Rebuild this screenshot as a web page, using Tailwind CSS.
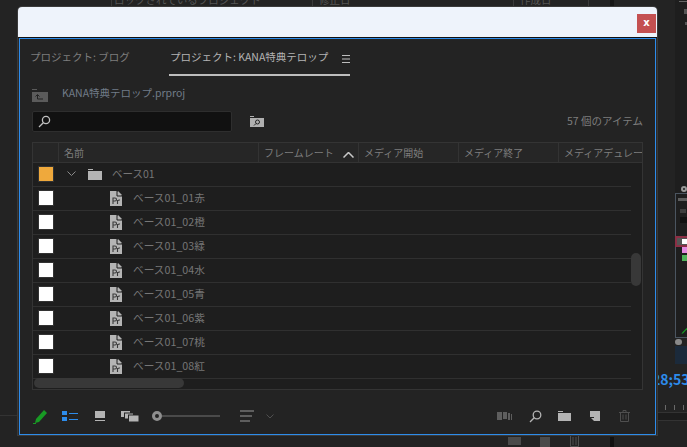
<!DOCTYPE html>
<html lang="ja">
<head>
<meta charset="utf-8">
<script src="https://cdn.jsdelivr.net/npm/@tailwindcss/browser@4"></script>
</head>
<body class="m-0 bg-[#232323]">
<div class="relative w-[687px] h-[447px] overflow-hidden bg-[#232323] font-['Noto_Sans_CJK_JP','Noto_Sans',sans-serif] text-[10.5px] leading-none text-[#8a8a8a]">

  <!-- application behind the dialog -->
  <div class="absolute left-[111px] top-[-5px] h-[12px] flex text-[#555] whitespace-nowrap">
    <span class="w-[201px] pl-[2px] border-l border-[#3a3a3a]">ロックされているプロジェクト</span>
    <span class="w-[201px] pl-[6px] border-l border-[#3a3a3a]">修正日</span>
    <span class="w-[76px] pl-[6px] border-x border-[#3a3a3a]">作成日</span>
  </div>
  <div class="absolute left-[610px] top-0 w-[4px] h-[7px] bg-[#161616]"></div>
  <div class="absolute left-[675px] top-0 w-[12px] h-[193px] bg-[#1e1e1e]">
    <div class="ml-[4px] mt-[1px] h-[1px] bg-[#666]"></div>
    <div class="ml-[9px] mt-[7px] w-[3px] h-[5px] bg-[#555]"></div>
    <div class="ml-[10px] mt-[8px] w-[2px] h-[3px] bg-[#555]"></div>
    <div class="ml-[6px] mt-[161px] w-[6px] h-[6px] rounded-full border-2 border-[#999]"></div>
  </div>
  <div class="absolute left-[675px] top-[193px] w-[13px] h-[145px] border border-[#4b5560] bg-[#1e1e1e]">
    <div class="ml-[2px] mt-[4px] w-[9px] h-[3px] bg-[#5e5e5e]"></div>
    <div class="ml-[4px] mt-[8px] w-[6px] h-[4px] bg-[#3e3e3e]"></div>
    <div class="ml-[4px] mt-[4px] w-[8px] h-[6px] bg-[#111]"></div>
    <div class="mt-[13px] -ml-[1px] w-[14px] h-[11px] border-2 border-[#8c2f45] bg-[#555] flex items-center justify-end"><span class="w-[5px] h-[5px] bg-white"></span></div>
    <div class="ml-[6px] w-[6px] h-[6px] bg-[#e58ae0]"></div>
    <div class="ml-[6px] mt-[2px] w-[6px] h-[6px] bg-[#4fb25a]"></div>
    <svg class="ml-[5px] mt-[67px] w-[7px] h-[6px]" viewBox="0 0 7 7"><path d="M6 0l1 1-5 5-2 1 1-2z" fill="#189a24"/></svg>
  </div>
  <div class="absolute left-[675px] top-[339px] w-[7px] h-[6px] rounded-full bg-[#8a8a8a]"></div>
  <div class="absolute left-[675px] top-[346px] w-[12px] h-[18px] bg-[#1b2a3b]"></div>
  <div class="absolute left-[652px] top-[372px] text-[14px] font-bold whitespace-nowrap text-[#2d8ceb]">28;53</div>
  <div class="absolute left-[657px] top-[412px] w-[30px] h-[9px] bg-[#1c1c1c] border-y border-[#333]"></div>
  <div class="absolute left-[665px] top-[405px] w-[1px] h-[5px] bg-[#6a6a6a]"></div>
  <div class="absolute left-[674px] top-[405px] w-[1px] h-[5px] bg-[#6a6a6a]"></div>
  <div class="absolute left-[683px] top-[405px] w-[1px] h-[5px] bg-[#6a6a6a]"></div>
  <div class="absolute left-0 top-[415px] w-[18px] h-[1px] bg-[#333]"></div>
  <div class="absolute left-[508px] top-[437px] w-[13px] h-[8px] bg-[#4a4a4a]"></div>
  <div class="absolute left-[540px] top-[437px] w-[10px] h-[10px] bg-[#4a4a4a]"></div>
  <svg class="absolute left-[570px] top-[436px] w-[9px] h-[11px]" viewBox="0 0 9 11" fill="none" stroke="#4f4f4f"><path d="M.5 0v10.500h8V0M3 1v8M6 1v8"/></svg>
  <div class="absolute left-[610px] top-[437px] w-[4px] h-[10px] bg-[#111]"></div>

  <!-- dialog -->
  <div class="absolute left-[18px] top-[7px] w-[639px] h-[428px] rounded-t-[4px] bg-[#2a2a2a] flex flex-col shadow-[0_0_0_1px_#3a3a3a]">
    <div class="h-[30px] shrink-0 rounded-t-[4px] bg-[#eef3fb] flex justify-end items-start pt-[7px] pr-[1px]">
      <div class="w-[19px] h-[19px] bg-[#c45051] flex items-center justify-center text-white font-bold text-[10px] pb-[2px] font-['DejaVu_Sans',sans-serif]">x</div>
    </div>
    <div class="h-[1px] bg-[#111]"></div>
    <div class="flex-1 ml-[1px] mr-[1px] border border-[#2d8ceb] bg-[#232323] flex flex-col">

      <!-- tabs -->
      <div class="h-[37px] shrink-0 flex pl-[10px] pt-[1px]">
        <div class="w-[139px] pt-[12px] text-[#7e7e7e]">プロジェクト: ブログ</div>
        <div class="w-[181px] h-[36px] border-b-2 border-[#bdbdbd] pt-[12px] pl-[1px] flex text-[#b4b4b4]">
          <span class="w-[172px] whitespace-nowrap">プロジェクト: KANA特典テロップ</span>
          <svg class="w-[8px] h-[8px] mt-[3px] shrink-0" viewBox="0 0 8 8" fill="#bdbdbd"><rect y="0" width="8" height="1"/><rect y="3.500" width="8" height="1"/><rect y="7" width="8" height="1"/></svg>
        </div>
      </div>

      <!-- path -->
      <div class="h-[34px] shrink-0 flex items-center pl-[12px]">
        <svg class="w-[16px] h-[13px] mt-[5px]" viewBox="0 0 16 13"><path d="M0 0h5v1H0zM0 3h16v10H0z" fill="#5b5b5b"/><path d="M3.500 7.500l2-2 2 2M5.500 6v4H11" stroke="#232323" fill="none"/></svg>
        <span class="ml-[14px] text-[#717c88]">KANA特典テロップ.prproj</span>
      </div>

      <!-- search -->
      <div class="h-[22px] shrink-0 flex items-center pl-[12px] pr-[12px]">
        <div class="w-[200px] h-[21px] rounded-[2px] bg-[#111] border border-[#2e2e2e] flex items-center pl-[5px]">
          <svg class="w-[13px] h-[13px]" viewBox="0 0 13 13" fill="none" stroke="#c0c0c0" stroke-width="1.3"><circle cx="8" cy="5" r="3.6"/><path d="M5.3 7.800L1 12"/></svg>
        </div>
        <svg class="ml-[18px] w-[14px] h-[11px]" viewBox="0 0 14 11"><path d="M0 0h4v1H0zM0 2h14v9H0z" fill="#b0b0b0"/><circle cx="7.500" cy="6" r="2" fill="none" stroke="#232323"/><path d="M6 7.500L4 9.500" stroke="#232323"/></svg>
        <span class="ml-auto text-[#7e7e7e]">57 個のアイテム</span>
      </div>

      <!-- table -->
      <div class="relative mt-[10px] ml-[12px] w-[611px] h-[248px] shrink-0 border border-[#343434] bg-[#1e1e1e] overflow-hidden">
        <div class="h-[20px] bg-[#262626] border-b border-[#333] flex text-[10px] text-[#7e7e7e] whitespace-nowrap">
          <div class="w-[26px] border-r border-[#333]"></div>
          <div class="w-[200px] pl-[5px] pt-[5px] border-r border-[#333]">名前</div>
          <div class="w-[100px] pl-[5px] pt-[5px] border-r border-[#333] flex items-start">
            <span class="w-[70px]">フレームレート</span>
            <svg class="ml-[9px] mt-[4px] w-[11px] h-[6px] shrink-0" viewBox="0 0 11 6" fill="none" stroke="#c8c8c8" stroke-width="1.500"><path d="M.5 5.500l5-5 5 5"/></svg>
          </div>
          <div class="w-[100px] pl-[5px] pt-[5px] border-r border-[#333]">メディア開始</div>
          <div class="w-[100px] pl-[5px] pt-[5px] border-r border-[#333]">メディア終了</div>
          <div class="flex-1 pl-[5px] pt-[5px] overflow-hidden">メディアデュレーション</div>
        </div>
        <div class="w-[598px] flex flex-col text-[#767676]">
          <div class="h-[24px] pb-[1px] border-b border-[#303030] flex items-center pl-[6px]">
            <span class="w-[14px] h-[14px] bg-[#efa93c] outline outline-1 outline-[#333]"></span>
            <svg class="ml-[14px] w-[9px] h-[6px]" viewBox="0 0 9 6" fill="none" stroke="#8a8a8a"><path d="M.5.5l4 4 4-4"/></svg>
            <svg class="ml-[12px] w-[14px] h-[11px]" viewBox="0 0 14 11" fill="#b4b4b4"><path d="M0 0h5v1H0zM0 2h14v9H0z"/></svg>
            <span class="ml-[10px]">ベース01</span>
          </div>
          <div class="h-[24px] pb-[1px] border-b border-[#303030] flex items-center pl-[6px]"><span class="w-[14px] h-[14px] bg-white outline outline-1 outline-[#333]"></span><svg class="ml-[57px] w-[12px] h-[15px]" viewBox="0 0 12 15"><path d="M0 0h7l5 5v10H0z" fill="#b4b4b4"/><path d="M8 0l4 4H8z" fill="#b4b4b4"/><path d="M7 0v5h5" fill="none" stroke="#1e1e1e"/><path d="M3 13V7h2a1.500 1.500 0 010 3H3M7.500 13V9M7.500 10q1-1.200 2.500-1" fill="none" stroke="#3a3a3a" stroke-width="1.100"/></svg><span class="ml-[11px] text-[10.7px]">ベース01_01赤</span></div>
          <div class="h-[24px] pb-[1px] border-b border-[#303030] flex items-center pl-[6px]"><span class="w-[14px] h-[14px] bg-white outline outline-1 outline-[#333]"></span><svg class="ml-[57px] w-[12px] h-[15px]" viewBox="0 0 12 15"><path d="M0 0h7l5 5v10H0z" fill="#b4b4b4"/><path d="M8 0l4 4H8z" fill="#b4b4b4"/><path d="M7 0v5h5" fill="none" stroke="#1e1e1e"/><path d="M3 13V7h2a1.500 1.500 0 010 3H3M7.500 13V9M7.500 10q1-1.200 2.500-1" fill="none" stroke="#3a3a3a" stroke-width="1.100"/></svg><span class="ml-[11px] text-[10.7px]">ベース01_02橙</span></div>
          <div class="h-[24px] pb-[1px] border-b border-[#303030] flex items-center pl-[6px]"><span class="w-[14px] h-[14px] bg-white outline outline-1 outline-[#333]"></span><svg class="ml-[57px] w-[12px] h-[15px]" viewBox="0 0 12 15"><path d="M0 0h7l5 5v10H0z" fill="#b4b4b4"/><path d="M8 0l4 4H8z" fill="#b4b4b4"/><path d="M7 0v5h5" fill="none" stroke="#1e1e1e"/><path d="M3 13V7h2a1.500 1.500 0 010 3H3M7.500 13V9M7.500 10q1-1.200 2.500-1" fill="none" stroke="#3a3a3a" stroke-width="1.100"/></svg><span class="ml-[11px] text-[10.7px]">ベース01_03緑</span></div>
          <div class="h-[24px] pb-[1px] border-b border-[#303030] flex items-center pl-[6px]"><span class="w-[14px] h-[14px] bg-white outline outline-1 outline-[#333]"></span><svg class="ml-[57px] w-[12px] h-[15px]" viewBox="0 0 12 15"><path d="M0 0h7l5 5v10H0z" fill="#b4b4b4"/><path d="M8 0l4 4H8z" fill="#b4b4b4"/><path d="M7 0v5h5" fill="none" stroke="#1e1e1e"/><path d="M3 13V7h2a1.500 1.500 0 010 3H3M7.500 13V9M7.500 10q1-1.200 2.500-1" fill="none" stroke="#3a3a3a" stroke-width="1.100"/></svg><span class="ml-[11px] text-[10.7px]">ベース01_04水</span></div>
          <div class="h-[24px] pb-[1px] border-b border-[#303030] flex items-center pl-[6px]"><span class="w-[14px] h-[14px] bg-white outline outline-1 outline-[#333]"></span><svg class="ml-[57px] w-[12px] h-[15px]" viewBox="0 0 12 15"><path d="M0 0h7l5 5v10H0z" fill="#b4b4b4"/><path d="M8 0l4 4H8z" fill="#b4b4b4"/><path d="M7 0v5h5" fill="none" stroke="#1e1e1e"/><path d="M3 13V7h2a1.500 1.500 0 010 3H3M7.500 13V9M7.500 10q1-1.200 2.500-1" fill="none" stroke="#3a3a3a" stroke-width="1.100"/></svg><span class="ml-[11px] text-[10.7px]">ベース01_05青</span></div>
          <div class="h-[24px] pb-[1px] border-b border-[#303030] flex items-center pl-[6px]"><span class="w-[14px] h-[14px] bg-white outline outline-1 outline-[#333]"></span><svg class="ml-[57px] w-[12px] h-[15px]" viewBox="0 0 12 15"><path d="M0 0h7l5 5v10H0z" fill="#b4b4b4"/><path d="M8 0l4 4H8z" fill="#b4b4b4"/><path d="M7 0v5h5" fill="none" stroke="#1e1e1e"/><path d="M3 13V7h2a1.500 1.500 0 010 3H3M7.500 13V9M7.500 10q1-1.200 2.500-1" fill="none" stroke="#3a3a3a" stroke-width="1.100"/></svg><span class="ml-[11px] text-[10.7px]">ベース01_06紫</span></div>
          <div class="h-[24px] pb-[1px] border-b border-[#303030] flex items-center pl-[6px]"><span class="w-[14px] h-[14px] bg-white outline outline-1 outline-[#333]"></span><svg class="ml-[57px] w-[12px] h-[15px]" viewBox="0 0 12 15"><path d="M0 0h7l5 5v10H0z" fill="#b4b4b4"/><path d="M8 0l4 4H8z" fill="#b4b4b4"/><path d="M7 0v5h5" fill="none" stroke="#1e1e1e"/><path d="M3 13V7h2a1.500 1.500 0 010 3H3M7.500 13V9M7.500 10q1-1.200 2.500-1" fill="none" stroke="#3a3a3a" stroke-width="1.100"/></svg><span class="ml-[11px] text-[10.7px]">ベース01_07桃</span></div>
          <div class="h-[24px] pb-[1px] border-b border-[#303030] flex items-center pl-[6px]"><span class="w-[14px] h-[14px] bg-white outline outline-1 outline-[#333]"></span><svg class="ml-[57px] w-[12px] h-[15px]" viewBox="0 0 12 15"><path d="M0 0h7l5 5v10H0z" fill="#b4b4b4"/><path d="M8 0l4 4H8z" fill="#b4b4b4"/><path d="M7 0v5h5" fill="none" stroke="#1e1e1e"/><path d="M3 13V7h2a1.500 1.500 0 010 3H3M7.500 13V9M7.500 10q1-1.200 2.500-1" fill="none" stroke="#3a3a3a" stroke-width="1.100"/></svg><span class="ml-[11px] text-[10.7px]">ベース01_08紅</span></div>
        </div>
        <div class="absolute left-[1px] top-[235px] w-[150px] h-[10px] rounded-full bg-[#383838]"></div>
        <div class="absolute left-[598px] top-[110px] w-[10px] h-[33px] rounded-full bg-[#383838]"></div>
      </div>

      <!-- bottom toolbar -->
      <div class="flex-1 flex items-center pl-[13px] pr-[25px] pt-[8px]">
        <svg class="w-[15px] h-[15px]" viewBox="0 0 15 15"><path d="M11 1l3 3-8 9-4 1 1-4z" fill="#189a24"/><path d="M0 14.500h3" stroke="#189a24"/></svg>
        <svg class="ml-[14px] w-[16px] h-[11px]" viewBox="0 0 16 11" fill="#2d8ceb"><rect width="5" height="4"/><rect y="6" width="5" height="4"/><rect x="7" y="2" width="9" height="1"/><rect x="7" y="8" width="9" height="1"/></svg>
        <svg class="ml-[17px] w-[10px] h-[10px]" viewBox="0 0 10 10" fill="#b4b4b4"><rect width="10" height="7"/><rect y="9" width="10" height="1"/></svg>
        <svg class="ml-[16px] w-[18px] h-[11px]" viewBox="0 0 18 11"><rect width="9" height="6" fill="#b4b4b4"/><rect x="3.500" y="2" width="9" height="6" fill="#b4b4b4" stroke="#232323"/><rect x="7.500" y="4" width="10.500" height="7" fill="#b4b4b4" stroke="#232323"/></svg>
        <span class="ml-[13px] w-[10px] h-[10px] rounded-full border-[3px] border-[#8f8f8f]"></span>
        <span class="w-[58px] h-[2px] bg-[#4a4a4a]"></span>
        <svg class="ml-[20px] w-[14px] h-[12px]" viewBox="0 0 14 12" fill="#5e5e5e"><rect width="14" height="2"/><rect y="5" width="12" height="2"/><rect y="10" width="10" height="2"/></svg>
        <svg class="ml-[12px] w-[8px] h-[5px]" viewBox="0 0 8 5" fill="none" stroke="#4f4f4f"><path d="M.5.5l3.500 3.500 3.500-3.500"/></svg>
        <svg class="ml-auto w-[15px] h-[8px]" viewBox="0 0 15 8" fill="#5e5e5e"><rect width="5" height="8"/><rect x="6" width="4" height="7"/><rect x="11" y="1" width="2" height="7"/><rect x="14" y="2" width="1" height="6"/></svg>
        <svg class="ml-[17px] w-[13px] h-[13px]" viewBox="0 0 13 13" fill="none" stroke="#b4b4b4" stroke-width="1.300"><circle cx="8" cy="5" r="3.800"/><path d="M5.200 7.800L1 12"/></svg>
        <svg class="ml-[16px] w-[13px] h-[10px]" viewBox="0 0 13 10" fill="#b4b4b4"><path d="M0 0h5v1H0zM0 2h13v8H0z"/></svg>
        <svg class="ml-[19px] w-[10px] h-[10px]" viewBox="0 0 10 10"><rect width="10" height="10" fill="#b4b4b4"/><path d="M0 6h4v4H0z" fill="#232323"/><path d="M1 7h3v3z" fill="#b4b4b4"/></svg>
        <svg class="ml-[19px] w-[11px] h-[12px]" viewBox="0 0 11 12" fill="none" stroke="#4f4f4f"><path d="M0 2.500h11M4 2.500V.5h3v2M1.500 2.500h8v9h-8zM4 4.500v5M7 4.500v5"/></svg>
      </div>
    </div>
  </div>
</div>
</body>
</html>
